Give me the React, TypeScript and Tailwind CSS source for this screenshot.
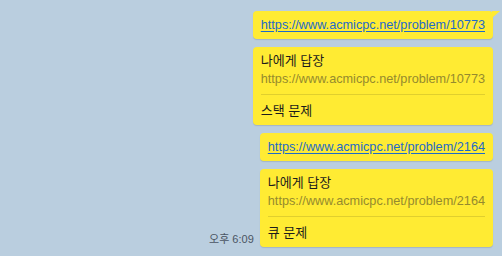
export default function App() {
  const font = { fontFamily: '"Liberation Sans", "Noto Sans CJK KR", sans-serif' };
  return (
    <div
      className="w-[502px] h-[256px] bg-[#bacedf] flex flex-col items-end gap-2 pt-[11px] pr-[9px] overflow-hidden"
      style={font}
    >
      <LinkBubble url="https://www.acmicpc.net/problem/10773" tail />
      <ReplyBubble url="https://www.acmicpc.net/problem/10773" text="스택 문제" />
      <LinkBubble url="https://www.acmicpc.net/problem/2164" />
      <div className="flex items-end gap-[6px]">
        <span className="text-[11px] leading-[13px] text-[#4a5563] mb-[1px]">오후 6:09</span>
        <ReplyBubble url="https://www.acmicpc.net/problem/2164" text="큐 문제" />
      </div>
    </div>
  );
}

function LinkBubble({ url, tail }: { url: string; tail?: boolean }) {
  return (
    <div className="relative bg-[#ffeb33] rounded-[4px] px-2 py-[6px] shadow-[0_1px_1px_rgba(0,0,0,0.12)]">
      <a className="block text-[12.7px] leading-[16px] text-[#1d6ac9] underline underline-offset-2">{url}</a>
      {tail && (
        <svg className="absolute top-0 -right-[7px]" width="8" height="8" viewBox="0 0 8 8">
          <path d="M0 0 H8 L0 7 Z" fill="#ffeb33" />
        </svg>
      )}
    </div>
  );
}

function ReplyBubble({ url, text }: { url: string; text: string }) {
  return (
    <div className="bg-[#ffeb33] rounded-[4px] px-2 pt-[5px] pb-[5px] shadow-[0_1px_1px_rgba(0,0,0,0.12)]">
      <div className="text-[13px] leading-[18px] text-[#1c1c1c]">나에게 답장</div>
      <div className="text-[12.7px] leading-[18px] text-[#958a2e]">{url}</div>
      <div className="h-px bg-[#e0cf2e] mt-[6px]" />
      <div className="text-[13px] leading-[18px] text-[#1c1c1c] mt-[7px]">{text}</div>
    </div>
  );
}
